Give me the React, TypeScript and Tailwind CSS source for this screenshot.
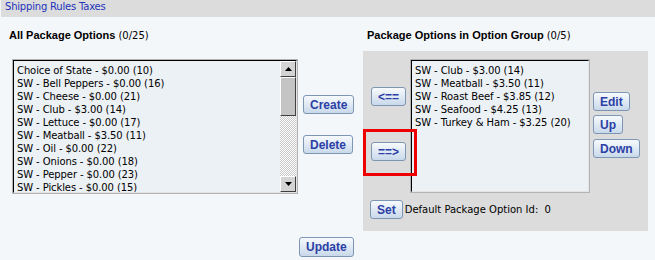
import React from "react";

const allOptions = [
  "Choice of State - $0.00 (10)",
  "SW - Bell Peppers - $0.00 (16)",
  "SW - Cheese - $0.00 (21)",
  "SW - Club - $3.00 (14)",
  "SW - Lettuce - $0.00 (17)",
  "SW - Meatball - $3.50 (11)",
  "SW - Oil - $0.00 (22)",
  "SW - Onions - $0.00 (18)",
  "SW - Pepper - $0.00 (23)",
  "SW - Pickles - $0.00 (15)",
];

const groupOptions = [
  "SW - Club - $3.00 (14)",
  "SW - Meatball - $3.50 (11)",
  "SW - Roast Beef - $3.85 (12)",
  "SW - Seafood - $4.25 (13)",
  "SW - Turkey & Ham - $3.25 (20)",
];

const thin = "font-['DejaVu_Sans',Verdana,sans-serif] text-[10px]";

export default function App() {
  return (
    <div className="w-[655px] h-[260px] overflow-hidden bg-[#f4f7fa] font-['Liberation_Sans',Arial,sans-serif] text-[11px] text-black">
      <div className={"ml-px h-[17px] bg-[#dcdcdc] pl-[4px] leading-[14px] tracking-[-0.2px] text-[#2233bb] " + thin}>Shipping Rules Taxes</div>

      <div className="flex items-start">
        {/* left side */}
        <div className="w-[363px] pl-[9px] pt-[12px]">
          <Title bold="All Package Options" rest="(0/25)" />
          <div className="mt-[17px] ml-[3px] flex items-start">
            <ListBox items={allOptions} className="w-[286px] h-[135px]" scroll />
            <div className="ml-[5px] mt-[36px] flex flex-col items-start gap-[21px]">
              <Btn>Create</Btn>
              <Btn>Delete</Btn>
            </div>
          </div>
          <div className="mt-[43px] ml-[290px]">
            <Btn className="h-[20px]">Update</Btn>
          </div>
        </div>

        {/* right side */}
        <div className="pt-[12px]">
          <div className="pl-[4px]">
            <Title bold="Package Options in Option Group" rest="(0/5)" />
          </div>
          <div className="relative mt-[9px] h-[180px] w-[285px] bg-[#dcdcdc] pt-[8px]">
            <div className="flex items-start">
              <div className="flex w-[47px] flex-col items-start pl-[8px] pt-[28px] gap-[36px]">
                <Btn className="w-[35px]">&lt;==</Btn>
                <Btn className="w-[35px]">==&gt;</Btn>
              </div>
              <ListBox items={groupOptions} className="w-[180px] h-[134px]" />
              <div className="ml-[3px] mt-[33px] flex flex-col items-start gap-[4px]">
                <Btn>Edit</Btn>
                <Btn>Up</Btn>
                <Btn className="mt-px">Down</Btn>
              </div>
            </div>
            <div className="mt-[7px] flex items-center pl-[7px]">
              <Btn>Set</Btn>
              <span className={"ml-[2px] " + thin}>Default Package Option Id:&nbsp; 0</span>
            </div>
            {/* annotation around the move button */}
            <div className="absolute left-0 top-[78px] h-[47px] w-[54px] border-[3px] border-[#ee0000]" />
          </div>
        </div>
      </div>
    </div>
  );
}

function Title({ bold, rest }: { bold: string; rest: string }) {
  return (
    <div className="leading-[13px]">
      <span className="font-bold">{bold}</span> <span className={thin}>{rest}</span>
    </div>
  );
}

function Btn({ children, className = "" }: { children: React.ReactNode; className?: string }) {
  return (
    <button
      className={
        "flex h-[19px] items-center justify-center rounded-[3px] border border-[#7d96b4] bg-gradient-to-b from-[#f7fafd] to-[#c9d9ea] px-[6px] font-['Liberation_Sans',Arial,sans-serif] text-[12px] font-bold leading-[14px] text-[#2b3fa6] " +
        className
      }
    >
      {children}
    </button>
  );
}

function ListBox({ items, className = "", scroll = false }: { items: string[]; className?: string; scroll?: boolean }) {
  return (
    <div className={"flex border border-[#b4b4b4] " + className}>
      <div className="flex flex-1 overflow-hidden border-t border-l border-t-black border-l-black border-r border-b border-r-[#e4e4e4] border-b-[#e4e4e4] bg-[#ecf1f5]">
        <div className={"flex-1 overflow-hidden pt-[3px] pl-[3px] tracking-[-0.1px] " + thin}>
          {items.map((it) => (
            <div key={it} className="whitespace-nowrap leading-[13px]">
              {it}
            </div>
          ))}
        </div>
        {scroll && <ScrollBar />}
      </div>
    </div>
  );
}

function ScrollBar() {
  return (
    <div className="flex w-[16px] flex-col">
      <div className="flex h-[16px] items-center justify-center border border-t-white border-l-white border-r-[#404040] border-b-[#404040] bg-[#d4d4d4]">
        <svg width="7" height="4" viewBox="0 0 7 4">
          <path d="M3.5 0 L7 4 L0 4 Z" fill="#000" />
        </svg>
      </div>
      <div className="h-[39px] border border-t-white border-l-white border-r-[#404040] border-b-[#404040] bg-[#c4c4c4]" />
      <div className="flex-1 bg-[repeating-conic-gradient(#c8c8c8_0%_25%,#ffffff_0%_50%)] bg-[length:2px_2px]" />
      <div className="flex h-[16px] items-center justify-center border border-t-white border-l-white border-r-[#404040] border-b-[#404040] bg-[#d4d4d4]">
        <svg width="7" height="4" viewBox="0 0 7 4">
          <path d="M0 0 L7 0 L3.5 4 Z" fill="#000" />
        </svg>
      </div>
    </div>
  );
}
